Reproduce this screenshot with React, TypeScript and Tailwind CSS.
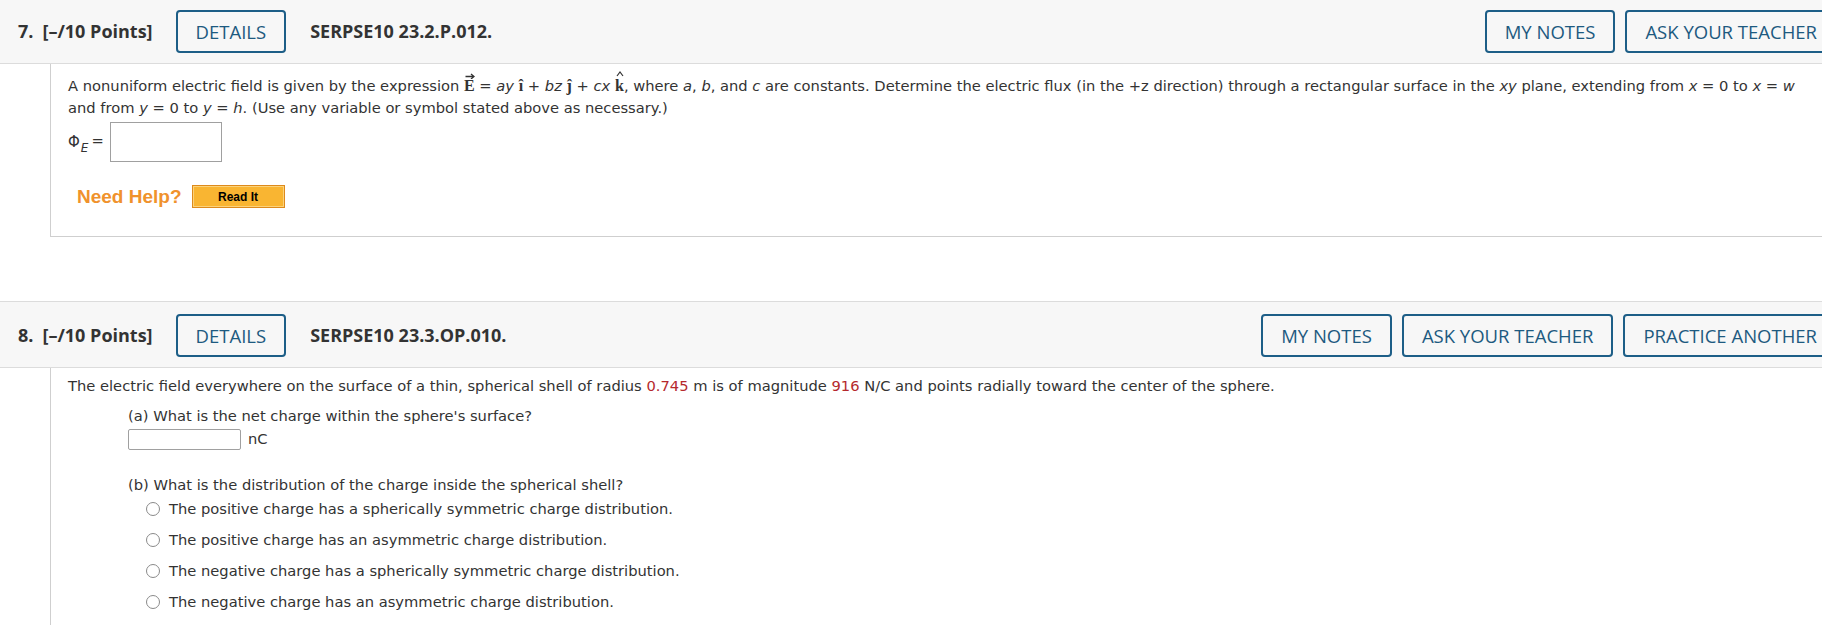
import React from 'react';

const btn =
  "h-[43px] px-[18px] border-2 border-[#1d5e87] rounded-[4px] text-[#1d5a80] text-[18.5px] font-medium flex items-center whitespace-nowrap";

const Header: React.FC<{ num: string; code: string; actions: string[] }> = ({ num, code, actions }) => (
  <div className="flex items-center bg-[#f7f7f7] border-t border-b border-[#dcdcdc] pt-[12px] pb-[10px] pl-[18px] pr-[13px] font-['Open_Sans',sans-serif] text-[#333]">
    <span className="text-[18px] font-bold">{num}</span>
    <span className="ml-[9px] text-[18px] font-bold">[–/10 Points]</span>
    <button className={btn + " ml-[23px]"}>DETAILS</button>
    <span className="ml-[24px] text-[18px] font-bold">{code}</span>
    <div className="ml-auto flex gap-[10px]">
      {actions.map((a) => (
        <button key={a} className={btn}>
          {a}
        </button>
      ))}
    </div>
  </div>
);

const I: React.FC<{ children: React.ReactNode }> = ({ children }) => <i className="italic">{children}</i>;

const Radio: React.FC<{ label: string }> = ({ label }) => (
  <div className="flex items-center h-[22px]">
    <span className="w-[14px] h-[14px] rounded-full border border-[#8a8a8a] bg-white"></span>
    <span className="ml-[9px]">{label}</span>
  </div>
);

export default function App() {
  return (
    <div className="w-full h-[625px] overflow-hidden bg-white">
      <div className="w-[1850px] -mt-[3px]">
        <Header num="7." code="SERPSE10 23.2.P.012." actions={["MY NOTES", "ASK YOUR TEACHER"]} />

        {/* question 7 */}
        <div className="ml-[50px] border-l border-b border-[#cfcfcf] pl-[17px] pt-[11px] pb-[28px] font-['DejaVu_Sans',sans-serif] text-[14.7px] text-[#333] leading-[22px]">
          <p className="whitespace-nowrap">
            A nonuniform electric field is given by the expression{" "}
            <span className="relative inline-block font-['Liberation_Serif',serif] font-bold text-[16px]">
              E
              <svg className="absolute left-[1px] -top-[3px]" width="10" height="7" viewBox="0 0 10 7">
                <path d="M0.5 4.5 H9 M6 2 L9 4.5 L6 7" stroke="#333" strokeWidth="1.3" fill="none" />
              </svg>
            </span>{" "}
            = <I>ay</I> <b className="font-['Liberation_Serif',serif] text-[16px]">î</b> + <I>bz</I>{" "}
            <b className="font-['Liberation_Serif',serif] text-[16px]">ĵ</b> + <I>cx</I>{" "}
            <span className="relative inline-block font-['Liberation_Serif',serif] font-bold text-[16px]">
              k
              <svg className="absolute left-[1px] -top-[4px]" width="8" height="6" viewBox="0 0 8 6">
                <path d="M1 5 L4 1 L7 5" stroke="#333" strokeWidth="1.2" fill="none" />
              </svg>
            </span>
            , where <I>a</I>, <I>b</I>, and <I>c</I> are constants. Determine the electric flux (in the +z direction) through a
            rectangular surface in the <I>xy</I> plane, extending from <I>x</I> = 0 to <I>x</I> = <I>w</I>
            <br />
            and from <I>y</I> = 0 to <I>y</I> = <I>h</I>. (Use any variable or symbol stated above as necessary.)
          </p>

          <div className="mt-[3px] flex items-center">
            <span className="text-[15px]">Φ</span>
            <span className="italic text-[12px] mt-[12px] ml-[1px]">E</span>
            <span className="ml-[3px] mb-[3px]">=</span>
            <span className="ml-[6px] w-[112px] h-[40px] border border-[#a0a0a0] bg-white"></span>
          </div>

          <div className="mt-[23px] flex items-center">
            <span className="ml-[9px] font-['Liberation_Sans',sans-serif] font-bold text-[19px] text-[#f0922c]">Need Help?</span>
            <button className="ml-[10px] w-[93px] h-[23px] bg-[#f9b532] border border-[#dd8a1c] shadow-[inset_0_0_0_1px_#fcd27a] font-['Liberation_Sans',sans-serif] font-bold text-[12px] text-black leading-none">
              Read It
            </button>
          </div>
        </div>

        <div className="h-[64px]"></div>

        <Header num="8." code="SERPSE10 23.3.OP.010." actions={["MY NOTES", "ASK YOUR TEACHER", "PRACTICE ANOTHER"]} />

        {/* question 8 */}
        <div className="ml-[50px] border-l border-[#cfcfcf] pl-[17px] pt-[7px] pb-[40px] font-['DejaVu_Sans',sans-serif] text-[14.7px] text-[#333] leading-[22px]">
          <p>
            The electric field everywhere on the surface of a thin, spherical shell of radius{" "}
            <span className="text-[#b5282c]">0.745</span> m is of magnitude <span className="text-[#b5282c]">916</span> N/C and
            points radially toward the center of the sphere.
          </p>

          <div className="ml-[60px]">
            <p className="mt-[8px]">(a) What is the net charge within the sphere's surface?</p>
            <div className="mt-[1px] flex items-center">
              <span className="w-[113px] h-[21px] border border-[#a0a0a0] rounded-[2px] bg-white"></span>
              <span className="ml-[7px]">nC</span>
            </div>

            <p className="mt-[24px]">(b) What is the distribution of the charge inside the spherical shell?</p>
            <div className="ml-[18px] mt-[2px] flex flex-col gap-[9px]">
              <Radio label="The positive charge has a spherically symmetric charge distribution." />
              <Radio label="The positive charge has an asymmetric charge distribution." />
              <Radio label="The negative charge has a spherically symmetric charge distribution." />
              <Radio label="The negative charge has an asymmetric charge distribution." />
            </div>
          </div>
        </div>
      </div>
    </div>
  );
}
